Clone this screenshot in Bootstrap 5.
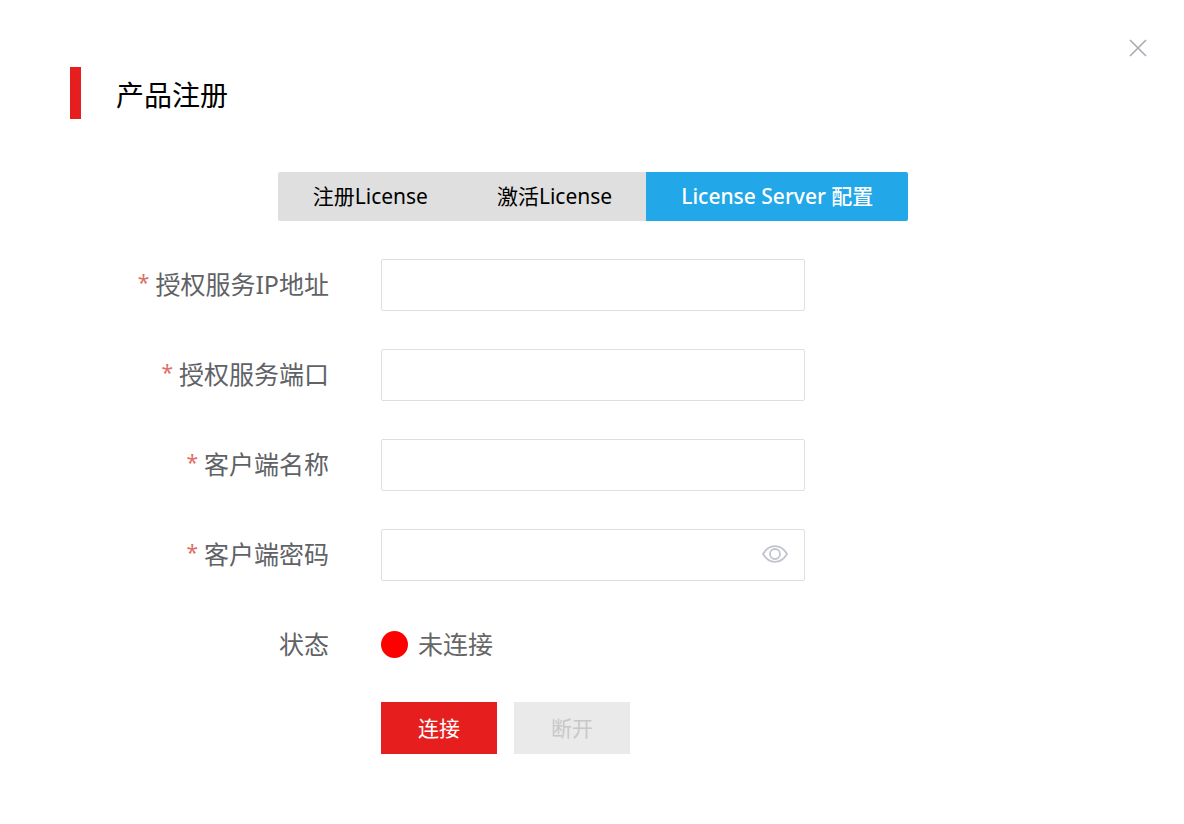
<!DOCTYPE html>
<html lang="zh-CN">
<head>
<meta charset="utf-8">
<meta name="viewport" content="width=device-width, initial-scale=1">
<title>产品注册</title>
<link href="https://cdn.jsdelivr.net/npm/bootstrap@5.3.0/dist/css/bootstrap.min.css" rel="stylesheet">
<script src="https://cdn.jsdelivr.net/npm/bootstrap@5.3.0/dist/js/bootstrap.bundle.min.js" defer></script>
<style>
  body { font-family: "Noto Sans", "Noto Sans CJK SC", sans-serif; color: #606266; background: #fff; }
  .title-bar { padding: 67px 34px 0 70px; }
  .accent { width: 11px; height: 52px; background: #e61f1e; }
  .page-title { font-size: 28px; line-height: 56px; margin: 0 0 0 35px; color: #000; font-weight: 400; }
  .close-btn { width: 24px; height: 24px; margin-top: -31px; color: #a9adb6; }
  .mode-tabs { margin: 49px 0 38px; padding-left: 2px; }
  .mode-tabs .btn { --bs-btn-padding-x: 35px; --bs-btn-padding-y: 0; --bs-btn-font-size: 21px; --bs-btn-line-height: 49px;
    --bs-btn-border-width: 0; --bs-btn-border-radius: 2px; --bs-btn-bg: #dfdfdf; --bs-btn-color: #000;
    --bs-btn-active-bg: #22a7e8; --bs-btn-active-color: #fff; }
  .mode-tabs .btn-wide { font-weight: 500; }
  .form-line { display: grid; grid-template-columns: 1fr minmax(0, 424px) 1fr; column-gap: 52px; margin-bottom: 38px; padding-left: 2px; }
  .line-label, .status-text { font-size: 25px; line-height: 50px; white-space: nowrap; }
  .line-label { text-align: right; }
  .star { color: #dd6f66; margin-right: 6px; font-size: 21px; line-height: 1; vertical-align: 4px; }
  .form-line .form-control { height: 52px; border: 1px solid #dcdfe6; border-radius: 2px; font-size: 25px; }
  .eye-btn { position: absolute; right: 16px; top: 12px; width: 28px; height: 26px; color: #c0c4cc; }
  .dot { width: 27px; height: 27px; background: #f00; }
  .status-line { margin-bottom: 33px; }
  .status-text { color: #666; margin-left: 10px; }
  .actions { gap: 17px; }
  .action { --bs-btn-padding-x: 37px; --bs-btn-padding-y: 0; --bs-btn-font-size: 21px; --bs-btn-line-height: 52px;
    --bs-btn-border-width: 0; --bs-btn-border-radius: 0; --bs-btn-disabled-opacity: 1; }
  .action-on { --bs-btn-bg: #e61f1e; --bs-btn-color: #fff; --bs-btn-hover-bg: #cc1918; --bs-btn-hover-color: #fff; }
  .action-off { --bs-btn-disabled-bg: #eaeaea; --bs-btn-disabled-color: #c8c8c8; }
</style>
</head>
<body>
<header class="title-bar d-flex align-items-start">
  <div class="accent"></div>
  <h1 class="page-title">产品注册</h1>
  <button type="button" class="close-btn btn p-0 border-0 ms-auto d-flex align-items-center justify-content-center" aria-label="关闭">
    <svg width="18" height="18" viewBox="0 0 18 18" fill="none" stroke="currentColor" stroke-width="1.7"><path d="M1 1l16 16M17 1L1 17"/></svg>
  </button>
</header>
<main>
  <form>
    <div class="mode-tabs d-flex justify-content-center">
      <div class="btn-group" role="group" aria-label="License">
        <input type="radio" class="btn-check" name="mode" id="mode-register">
        <label class="btn" for="mode-register">注册License</label>
        <input type="radio" class="btn-check" name="mode" id="mode-activate">
        <label class="btn" for="mode-activate">激活License</label>
        <input type="radio" class="btn-check" name="mode" id="mode-server" checked>
        <label class="btn btn-wide" for="mode-server">License Server 配置</label>
      </div>
    </div>
    <div class="form-line">
      <label class="line-label" for="server-ip"><span class="star">*</span>授权服务IP地址</label>
      <input type="text" class="form-control" id="server-ip">
    </div>
    <div class="form-line">
      <label class="line-label" for="server-port"><span class="star">*</span>授权服务端口</label>
      <input type="text" class="form-control" id="server-port">
    </div>
    <div class="form-line">
      <label class="line-label" for="client-name"><span class="star">*</span>客户端名称</label>
      <input type="text" class="form-control" id="client-name">
    </div>
    <div class="form-line">
      <label class="line-label" for="client-password"><span class="star">*</span>客户端密码</label>
      <div class="position-relative">
        <input type="password" class="form-control" id="client-password">
        <button type="button" class="eye-btn btn p-0 border-0 d-flex align-items-center justify-content-center" aria-label="显示密码">
          <svg width="26" height="18" viewBox="0 0 26 18" fill="none" stroke="currentColor" stroke-width="1.8"><path d="M1 9C4 4 8 1.200 13 1.200S22 4 25 9C22 14 18 16.800 13 16.800S4 14 1 9z"/><circle cx="13" cy="9" r="5"/></svg>
        </button>
      </div>
    </div>
    <div class="form-line status-line">
      <div class="line-label">状态</div>
      <div class="d-flex align-items-center">
        <span class="dot rounded-circle"></span>
        <span class="status-text">未连接</span>
      </div>
    </div>
    <div class="form-line">
      <div></div>
      <div class="actions d-flex">
        <button type="button" class="btn action action-on">连接</button>
        <button type="button" class="btn action action-off" disabled>断开</button>
      </div>
    </div>
  </form>
</main>
</body>
</html>
